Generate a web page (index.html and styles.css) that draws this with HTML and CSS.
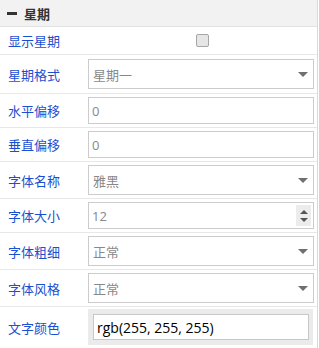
FILE: index.html
```html
<!DOCTYPE html>
<html lang="zh-CN">
<head>
  <meta charset="UTF-8">
  <title>星期</title>
  <link rel="stylesheet" href="styles.css">
</head>
<body>

  <div class="panel">
    <div class="panel-head"><span class="collapse"></span>星期</div>

    <div class="row row-check">
      <label class="row-label">显示星期</label>
      <div class="row-field field-center"><input type="checkbox" class="check"></div>
    </div>

    <div class="row row-tall">
      <label class="row-label">星期格式</label>
      <div class="row-field">
        <div class="select"><span>星期一</span><svg class="caret" width="10" height="5" viewBox="0 0 10 5"><path d="M0 0H10L5 5Z"/></svg></div>
      </div>
    </div>

    <div class="row">
      <label class="row-label">水平偏移</label>
      <div class="row-field"><input type="text" class="text-input" value="0"></div>
    </div>

    <div class="row">
      <label class="row-label">垂直偏移</label>
      <div class="row-field"><input type="text" class="text-input" value="0"></div>
    </div>

    <div class="row">
      <label class="row-label">字体名称</label>
      <div class="row-field">
        <div class="select"><span>雅黑</span><svg class="caret" width="10" height="5" viewBox="0 0 10 5"><path d="M0 0H10L5 5Z"/></svg></div>
      </div>
    </div>

    <div class="row">
      <label class="row-label">字体大小</label>
      <div class="row-field">
        <div class="spin-box">
          <input type="text" class="spin-input" value="12">
          <div class="spinner">
            <svg width="8" height="4" viewBox="0 0 8 4"><path d="M4 0L8 4H0Z"/></svg>
            <svg width="8" height="4" viewBox="0 0 8 4"><path d="M0 0H8L4 4Z"/></svg>
          </div>
        </div>
      </div>
    </div>

    <div class="row">
      <label class="row-label">字体粗细</label>
      <div class="row-field">
        <div class="select"><span>正常</span><svg class="caret" width="10" height="5" viewBox="0 0 10 5"><path d="M0 0H10L5 5Z"/></svg></div>
      </div>
    </div>

    <div class="row">
      <label class="row-label">字体风格</label>
      <div class="row-field">
        <div class="select"><span>正常</span><svg class="caret" width="10" height="5" viewBox="0 0 10 5"><path d="M0 0H10L5 5Z"/></svg></div>
      </div>
    </div>

    <div class="row row-color">
      <label class="row-label">文字颜色</label>
      <div class="row-field">
        <div class="color-box"><input type="text" class="color-input" value="rgb(255, 255, 255)"></div>
      </div>
    </div>
  </div>

</body>
</html>
```

FILE: styles.css
```css
body {
  margin: 0;
  background: #fff;
  font-family: "Open Sans", "Noto Sans CJK SC", sans-serif;
}
.panel {
  width: 317px;
  border-right: 1px solid #d9d9d9;
}
.panel-head {
  height: 26px;
  display: flex;
  align-items: center;
  gap: 7px;
  padding-left: 7px;
  background: #f2f2f2;
  border-bottom: 1px solid #e3e3e3;
  font-family: "Noto Sans CJK SC", sans-serif;
  font-size: 13px;
  font-weight: bold;
  color: #333;
}
.collapse {
  display: inline-block;
  width: 10px;
  height: 3px;
  background: #333;
}
.row {
  display: flex;
  align-items: center;
  padding: 3px 3px 3px 0;
  border-bottom: 1px solid #e8e8e8;
}
.row-check {
  height: 27px;
  padding-top: 0;
  padding-bottom: 0;
}
.row-tall {
  padding-top: 4px;
  padding-bottom: 4px;
}
.row-color {
  padding-top: 2px;
  padding-bottom: 3px;
}
.row-label {
  flex: 0 0 88px;
  box-sizing: border-box;
  padding-left: 8px;
  font-family: "Noto Sans CJK SC", sans-serif;
  font-size: 13px;
  color: #1a50d0;
}
.row-field {
  flex: 1;
  min-width: 0;
}
.field-center {
  display: flex;
  justify-content: center;
}
.check {
  appearance: none;
  width: 13px;
  height: 13px;
  margin: 0 0 0 2px;
  background: #e6e6e6;
  border: 1px solid #a6a6a6;
  border-radius: 2px;
  box-sizing: border-box;
}
.select {
  height: 30px;
  box-sizing: border-box;
  display: flex;
  align-items: center;
  justify-content: space-between;
  padding: 0 5px 0 4px;
  border: 1px solid #ccc;
  font-family: "Noto Sans CJK SC", sans-serif;
  font-size: 13px;
  color: #888;
}
.caret {
  fill: #6f6f6f;
}
.text-input,
.spin-input,
.color-input {
  display: block;
  width: 100%;
  box-sizing: border-box;
  margin: 0;
  outline: none;
  font-family: "Open Sans", sans-serif;
}
.text-input {
  height: 27px;
  padding: 0 3px;
  border: 1px solid #ccc;
  font-size: 13px;
  color: #888;
}
.spin-box {
  height: 27px;
  box-sizing: border-box;
  display: flex;
  align-items: center;
  border: 1px solid #ccc;
  padding-right: 2px;
}
.spin-input {
  flex: 1;
  height: 25px;
  padding: 0 3px;
  border: none;
  font-size: 13px;
  color: #888;
}
.spinner {
  width: 15px;
  height: 21px;
  display: flex;
  flex-direction: column;
  align-items: center;
  justify-content: center;
  gap: 4px;
  background: #ececec;
  fill: #555;
}
.spinner svg {
  display: block;
}
.color-box {
  margin-right: 1px;
  padding: 5px 4px 5px 5px;
  background: #ebebeb;
}
.color-input {
  height: 26px;
  padding: 0 3px;
  border: 1px solid #c8c8c8;
  background: #fff;
  font-size: 14px;
  color: #000;
}
```
